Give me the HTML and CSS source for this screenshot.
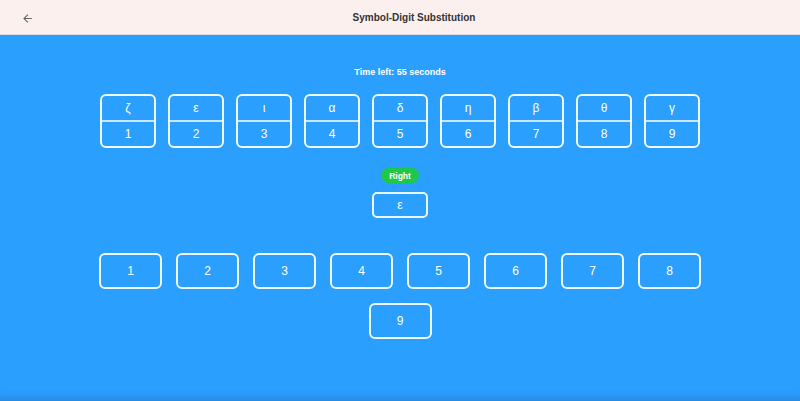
FILE: index.html
```html
<!DOCTYPE html>
<html lang="en">
<head>
  <meta charset="UTF-8">
  <meta name="viewport" content="width=device-width, initial-scale=1.0">
  <title>Symbol-Digit Substitution</title>
  <link rel="stylesheet" href="styles.css">
</head>
<body>

<header class="topbar">
  <button class="back" aria-label="Back">
    <svg viewBox="0 0 24 24" width="13" height="13"><path d="M20 11H7.83l5.59-5.59L12 4l-8 8 8 8 1.41-1.41L7.83 13H20v-2z" fill="currentColor"/></svg>
  </button>
  <h1 class="title">Symbol-Digit Substitution</h1>
</header>

<main class="game">
  <div class="timer">Time left: 55 seconds</div>

  <div class="key">
    <div class="pair"><div class="sym">ζ</div><div class="num">1</div></div>
    <div class="pair"><div class="sym">ε</div><div class="num">2</div></div>
    <div class="pair"><div class="sym">ι</div><div class="num">3</div></div>
    <div class="pair"><div class="sym">α</div><div class="num">4</div></div>
    <div class="pair"><div class="sym">δ</div><div class="num">5</div></div>
    <div class="pair"><div class="sym">η</div><div class="num">6</div></div>
    <div class="pair"><div class="sym">β</div><div class="num">7</div></div>
    <div class="pair"><div class="sym">θ</div><div class="num">8</div></div>
    <div class="pair"><div class="sym">γ</div><div class="num">9</div></div>
  </div>

  <div class="feedback">Right</div>
  <div class="current">ε</div>

  <div class="answers">
    <button class="answer">1</button>
    <button class="answer">2</button>
    <button class="answer">3</button>
    <button class="answer">4</button>
    <button class="answer">5</button>
    <button class="answer">6</button>
    <button class="answer">7</button>
    <button class="answer">8</button>
    <button class="answer">9</button>
  </div>
</main>

</body>
</html>
```

FILE: styles.css
```css
* {
  box-sizing: border-box;
}

html, body {
  height: 100%;
}

body {
  margin: 0;
  display: flex;
  flex-direction: column;
  font-family: "Liberation Sans", Arial, sans-serif;
  background-color: #2b9ffe;
}

.topbar {
  height: 35px;
  padding-left: 28px;
  display: flex;
  align-items: center;
  justify-content: center;
  position: relative;
  background-color: #fcf0ee;
  border-bottom: 1px solid #d9dde3;
}

.back {
  position: absolute;
  left: 15px;
  top: 9px;
  width: 24px;
  height: 18px;
  padding: 0;
  border: none;
  background: none;
  color: #666;
  display: flex;
  align-items: center;
  justify-content: center;
}

.title {
  margin: 0;
  font-size: 10px;
  font-weight: bold;
  color: #333;
}

.game {
  flex: 1;
  display: flex;
  flex-direction: column;
  align-items: center;
  padding-top: 31px;
  color: #fff;
  box-shadow: inset 0 -10px 10px -8px rgba(0, 0, 0, 0.18);
}

.timer {
  font-size: 9px;
  font-weight: bold;
  line-height: 12px;
}

.key {
  display: flex;
  gap: 12px;
  margin-top: 16px;
}

.pair {
  width: 56px;
  height: 54px;
  border: 2px solid rgba(255, 255, 255, 0.92);
  border-radius: 6px;
  display: flex;
  flex-direction: column;
}

.pair .sym,
.pair .num {
  flex: 1;
  display: flex;
  align-items: center;
  justify-content: center;
  font-size: 12px;
}

.pair .sym {
  border-bottom: 2px solid rgba(255, 255, 255, 0.75);
}

.feedback {
  margin-top: 20px;
  width: 38px;
  height: 15px;
  border-radius: 8px;
  background-color: #1ec94a;
  font-size: 8.5px;
  font-weight: bold;
  display: flex;
  align-items: center;
  justify-content: center;
}

.current {
  margin-top: 9px;
  width: 56px;
  height: 26px;
  border: 2px solid rgba(255, 255, 255, 0.9);
  border-radius: 5px;
  display: flex;
  align-items: center;
  justify-content: center;
  font-size: 12px;
}

.answers {
  width: 602px;
  margin-top: 35px;
  display: flex;
  flex-wrap: wrap;
  justify-content: center;
  gap: 14px;
}

.answer {
  width: 63px;
  height: 36px;
  padding: 0;
  border: 2px solid rgba(255, 255, 255, 0.92);
  border-radius: 6px;
  background: none;
  color: #fff;
  font-family: inherit;
  font-size: 12px;
  cursor: pointer;
}
```
